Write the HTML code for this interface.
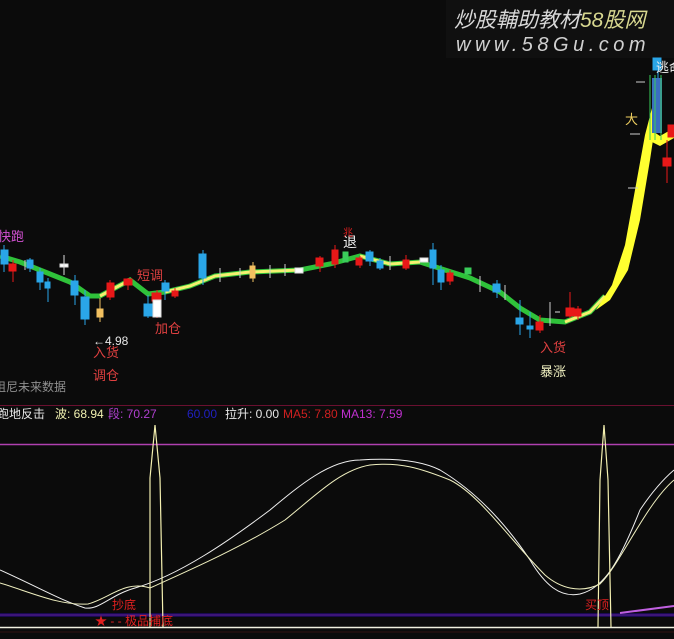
<!DOCTYPE html>
<html><head><meta charset="utf-8"><style>
html,body{margin:0;padding:0;background:#0b0b0b;width:674px;height:639px;overflow:hidden}
svg{display:block}
text{font-family:"Liberation Sans","Noto Sans CJK SC",sans-serif}
</style></head><body>
<svg width="674" height="639" viewBox="0 0 674 639" xmlns="http://www.w3.org/2000/svg">
<rect width="674" height="639" fill="#0b0b0b"/>
<rect x="446" y="0" width="228" height="58" fill="#101010"/>
<text x="454" y="27" font-size="21" fill="#d8d8d8" font-style="italic" font-family="'Noto Sans CJK SC',sans-serif">炒股輔助教材<tspan fill="#d8d890">58股网</tspan></text>
<text x="456" y="51" font-size="20" fill="#d0d0d0" font-style="italic" letter-spacing="4.5" font-family="'Liberation Mono',monospace">www.58Gu.com</text>

<path d="M0,256 L20,262 L45,272 L70,282 L90,296 L100,296 L115,288 L130,280 L148,294 L165,292 L190,286 L215,276 L250,272 L300,270 L330,264 L360,256 L390,264 L420,262 L445,270 L470,278 L500,292 L520,308 L540,320 L565,322 L590,312 L605,296" fill="none" stroke="#2fc23a" stroke-width="5"/>
<path d="M100,296 L115,288 L130,280 M165,292 L190,286 L215,276 L250,272 L300,270 M360,256 L390,264 L420,262 M565,322 L590,312 L605,296" fill="none" stroke="#f4f070" stroke-width="3"/>
<path d="M596,310 L612,285 L625,245 L635,190 L645,135 L652,108 L656,120 L650,160 L640,220 L628,270 L610,300 Z" fill="#ffff30"/>
<path d="M648,128 L660,136 L674,128 L674,138 L660,146 L648,140 Z" fill="#ffff30"/>

<g stroke-width="1">
<g fill="#2aa6e8" stroke="#2aa6e8">
<line x1="4" y1="245" x2="4" y2="272"/><rect x="1" y="250" width="7" height="14"/>
<line x1="30" y1="258" x2="30" y2="272"/><rect x="27" y="260" width="6" height="8"/>
<line x1="40" y1="268" x2="40" y2="290"/><rect x="37" y="272" width="6" height="10"/>
<line x1="48" y1="278" x2="48" y2="302"/><rect x="45" y="282" width="5" height="6"/>
<line x1="75" y1="275" x2="75" y2="305"/><rect x="71" y="281" width="7" height="14"/>
<line x1="85" y1="290" x2="85" y2="325"/><rect x="81" y="297" width="8" height="22"/>
<line x1="148" y1="295" x2="148" y2="318"/><rect x="144" y="304" width="8" height="12"/>
<line x1="165" y1="280" x2="165" y2="300"/><rect x="162" y="283" width="7" height="8"/>
<line x1="203" y1="250" x2="203" y2="285"/><rect x="199" y="254" width="7" height="24"/>
<line x1="370" y1="250" x2="370" y2="266"/><rect x="366" y="252" width="7" height="9"/>
<line x1="380" y1="258" x2="380" y2="270"/><rect x="377" y="261" width="6" height="7"/>
<line x1="433" y1="243" x2="433" y2="285"/><rect x="430" y="250" width="6" height="18"/>
<line x1="441" y1="265" x2="441" y2="290"/><rect x="438" y="270" width="6" height="12"/>
<line x1="497" y1="280" x2="497" y2="298"/><rect x="493" y="284" width="7" height="8"/>
<line x1="520" y1="300" x2="520" y2="335"/><rect x="516" y="318" width="7" height="6"/>
<line x1="530" y1="312" x2="530" y2="338"/><rect x="527" y="326" width="6" height="3"/>
<line x1="658" y1="58" x2="658" y2="110"/><rect x="653" y="58" width="8" height="12"/>
<rect x="652" y="78" width="10" height="55" fill="#3a6ec0" stroke="none"/>
</g>
<g fill="#e81818" stroke="#e81818">
<line x1="13" y1="260" x2="13" y2="282"/><rect x="9" y="264" width="7" height="7"/>
<line x1="110" y1="280" x2="110" y2="300"/><rect x="107" y="283" width="7" height="14"/>
<line x1="128" y1="278" x2="128" y2="290"/><rect x="124" y="279" width="8" height="6"/>
<line x1="157" y1="290" x2="157" y2="318"/><rect x="152" y="293" width="9" height="8"/>
<line x1="175" y1="288" x2="175" y2="298"/><rect x="172" y="291" width="6" height="5"/>
<line x1="320" y1="256" x2="320" y2="272"/><rect x="316" y="258" width="7" height="8"/>
<line x1="335" y1="245" x2="335" y2="268"/><rect x="332" y="250" width="6" height="14"/>
<line x1="360" y1="256" x2="360" y2="268"/><rect x="356" y="258" width="6" height="7"/>
<line x1="406" y1="255" x2="406" y2="270"/><rect x="403" y="260" width="6" height="8"/>
<line x1="450" y1="270" x2="450" y2="285"/><rect x="447" y="273" width="6" height="8"/>
<line x1="540" y1="315" x2="540" y2="333"/><rect x="536" y="322" width="7" height="8"/>
<line x1="570" y1="292" x2="570" y2="318"/><rect x="566" y="308" width="8" height="8"/>
<line x1="578" y1="306" x2="578" y2="320"/><rect x="575" y="309" width="6" height="7"/>
<line x1="667" y1="140" x2="667" y2="183"/><rect x="663" y="158" width="8" height="8"/>
<rect x="668" y="125" width="6" height="12"/>
</g>
<g fill="#f2c060" stroke="#f2c060">
<line x1="100" y1="298" x2="100" y2="322"/><rect x="97" y="309" width="6" height="8"/>
<line x1="253" y1="262" x2="253" y2="282"/><rect x="250" y="266" width="5" height="12"/>
</g>
<g fill="#fff" stroke="#ddd">
<rect x="153" y="300" width="8" height="17"/>
<rect x="60" y="264" width="8" height="3"/>
<line x1="64" y1="255" x2="64" y2="275"/>
<rect x="295" y="268" width="8" height="5"/>
<rect x="420" y="258" width="8" height="4"/>
<line x1="555" y1="312" x2="560" y2="312"/>
</g>
<g fill="#3acc5a" stroke="#3acc5a">
<line x1="650" y1="75" x2="650" y2="140"/><line x1="655" y1="75" x2="655" y2="140"/><line x1="661" y1="75" x2="661" y2="140"/>
<rect x="343" y="252" width="5" height="10"/>
<rect x="465" y="268" width="6" height="6"/>
</g>
<g stroke="#ccc">
<line x1="636" y1="82" x2="645" y2="82"/><line x1="630" y1="134" x2="640" y2="134"/><line x1="628" y1="188" x2="638" y2="188"/>
<line x1="25" y1="260" x2="25" y2="270"/><line x1="220" y1="268" x2="220" y2="282"/><line x1="270" y1="265" x2="270" y2="278"/>
<line x1="240" y1="268" x2="240" y2="278"/><line x1="285" y1="264" x2="285" y2="276"/><line x1="390" y1="256" x2="390" y2="270"/>
<line x1="480" y1="276" x2="480" y2="292"/><line x1="505" y1="285" x2="505" y2="300"/><line x1="550" y1="302" x2="550" y2="326"/>
</g>
</g>

<text x="-2" y="241" font-size="13" fill="#d050d0">快跑</text>
<text x="137" y="280" font-size="13" fill="#e04040">短调</text>
<text x="155" y="333" font-size="13" fill="#e04040">加仓</text>
<text x="93" y="345" font-size="12" fill="#e8e8e8">←4.98</text>
<text x="93" y="357" font-size="13" fill="#e04040">入货</text>
<text x="93" y="380" font-size="13" fill="#e04040">调仓</text>
<text x="-6" y="391" font-size="12" fill="#909090">阻尼未来数据</text>
<text x="343" y="247" font-size="14" fill="#f0f0f0">退</text>
<text x="343" y="236" font-size="10" fill="#e02020">兆</text>
<text x="540" y="352" font-size="13" fill="#e04040">入货</text>
<text x="540" y="376" font-size="13" fill="#f0f0c0">暴涨</text>
<text x="656" y="72" font-size="13" fill="#f0f0f0">逃命</text>
<text x="625" y="124" font-size="13" fill="#f0d060">大</text>

<line x1="0" y1="405.5" x2="674" y2="405.5" stroke="#6a1030"/>
<line x1="0" y1="444.5" x2="674" y2="444.5" stroke="#b040b0" stroke-width="1.5"/>

<text x="-3" y="418" font-size="12" fill="#e8e8e8">跑地反击</text>
<text x="55" y="418" font-size="12" fill="#f0f0b0">波: 68.94</text>
<text x="108" y="418" font-size="12" fill="#b040d0">段: 70.27</text>
<text x="187" y="418" font-size="12" fill="#2020c0">60.00</text>
<text x="225" y="418" font-size="12" fill="#e8e8e8">拉升: 0.00</text>
<text x="283" y="418" font-size="12" fill="#d02020">MA5: 7.80</text>
<text x="341" y="418" font-size="12" fill="#c030d0">MA13: 7.59</text>

<rect x="0" y="613" width="674" height="4" fill="#1a0a50"/>
<line x1="0" y1="615" x2="674" y2="615" stroke="#6020a0"/>
<line x1="620" y1="613" x2="674" y2="606" stroke="#c060e0" stroke-width="2"/>
<line x1="0" y1="627.5" x2="674" y2="627.5" stroke="#f0f0e0" stroke-width="1.5"/>
<line x1="0" y1="632" x2="674" y2="632" stroke="#301010"/>

<path d="M0,570 C40,588 60,600 85,608 C100,610 110,595 135,588 C180,575 230,540 270,510 C300,485 330,460 360,460 C390,458 420,460 440,470 C470,488 500,515 530,560 C545,585 560,598 580,594 C605,588 620,560 640,510 C650,495 660,482 674,470" fill="none" stroke="#f0f0f0" stroke-width="1"/>
<path d="M0,583 C30,592 60,606 88,604 C110,598 125,580 150,588 C190,570 240,548 285,520 C315,496 340,470 370,465 C400,462 420,468 450,480 C480,495 510,540 545,575 C560,588 580,594 600,584 C620,565 645,505 674,480" fill="none" stroke="#f0f0c0" stroke-width="1"/>
<path d="M150,627 L150,478 L155,425 L160,478 L163,627" fill="none" stroke="#f4f0b0" stroke-width="1.2"/>
<path d="M598,627 L600,480 L604,425 L608,480 L611,627" fill="none" stroke="#f4f0b0" stroke-width="1.2"/>

<text x="112" y="609" font-size="12" fill="#e02020">抄底</text>
<text x="95" y="625" font-size="12" fill="#e02020">★ - - 极品捕底</text>
<text x="585" y="609" font-size="12" fill="#e02020">买顶</text>
</svg>
</body></html>
